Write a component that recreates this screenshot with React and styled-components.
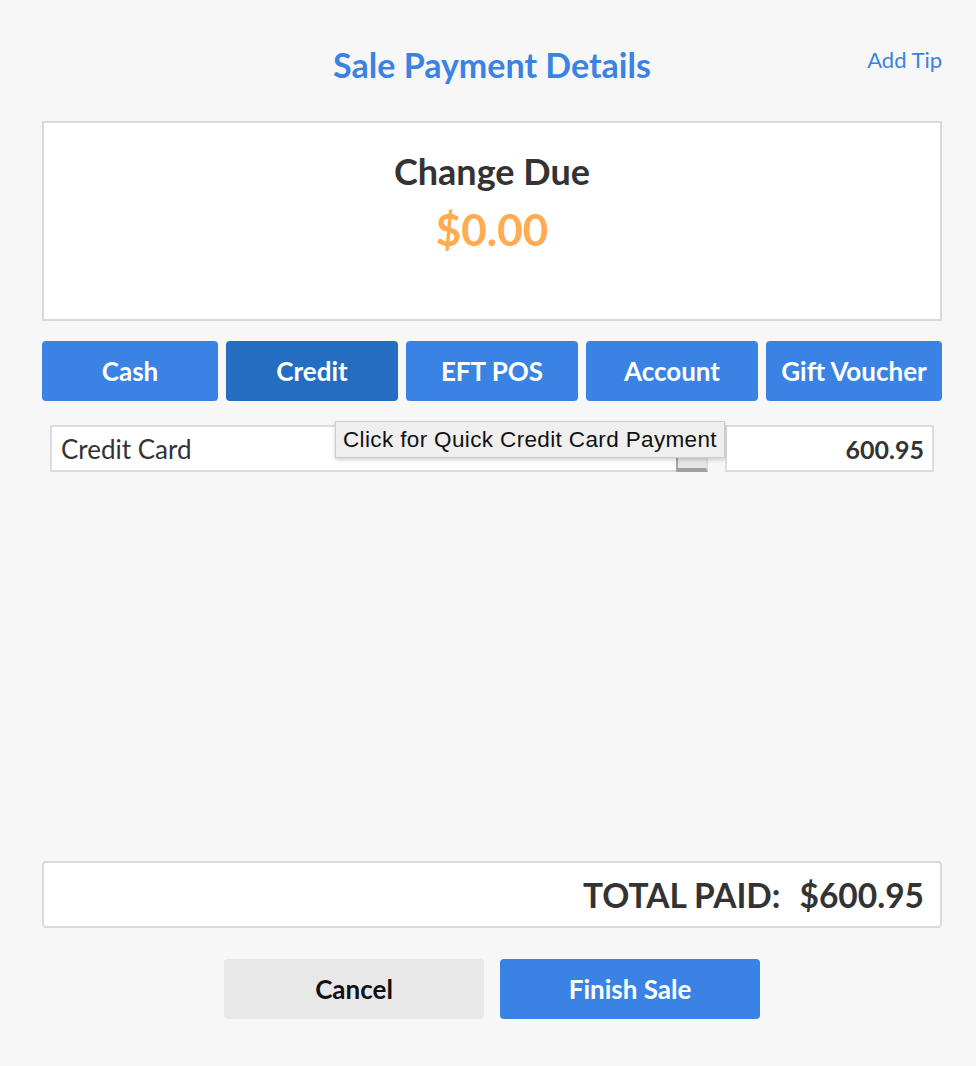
import React from 'react';
import styled, { createGlobalStyle } from 'styled-components';

const GlobalStyle = createGlobalStyle`
  html, body {
    margin: 0;
    padding: 0;
    background-color: #f7f7f7;
  }
  body {
    font-family: Lato, "Open Sans", sans-serif;
    color: #333;
  }
`;

const Page = styled.div`
  box-sizing: border-box;
  height: 100vh;
  padding: 44px 34px 47px 42px;
  display: flex;
  flex-direction: column;
`;

const Header = styled.div`
  display: grid;
  grid-template-columns: 1fr auto 1fr;
  align-items: start;
  height: 42px;
  margin-bottom: 35px;
`;

const Title = styled.h1`
  grid-column: 2;
  margin: 0;
  font-size: 34px;
  line-height: 42px;
  font-weight: 700;
  color: #3a83e4;
`;

const TipLink = styled.a`
  justify-self: end;
  font-size: 22px;
  line-height: 32px;
  color: #3a83e4;
  text-decoration: none;
  cursor: pointer;
`;

const ChangeBox = styled.div`
  box-sizing: border-box;
  height: 200px;
  background: #fff;
  border: 2px solid #d9d9d9;
  display: flex;
  flex-direction: column;
  align-items: center;
  padding-top: 26px;
`;

const ChangeLabel = styled.div`
  font-size: 36px;
  line-height: 44px;
  font-weight: 700;
  color: #333;
`;

const ChangeAmount = styled.div`
  margin-top: 10px;
  font-size: 44px;
  line-height: 52px;
  font-weight: 700;
  color: #ffab52;
`;

const MethodRow = styled.div`
  display: grid;
  grid-template-columns: 176px repeat(3, 1fr) 176px;
  gap: 8px;
  margin-top: 20px;
`;

const MethodButton = styled.button`
  height: 60px;
  border: none;
  border-radius: 4px;
  background: ${({ $active }) => ($active ? '#256dc1' : '#3a83e4')};
  color: #fff;
  font-family: Lato, sans-serif;
  font-size: 26px;
  font-weight: 700;
  padding: 0;
  cursor: pointer;
`;

const PaymentList = styled.div`
  flex: 1;
  padding: 24px 8px 0;
`;

const PaymentLine = styled.div`
  position: relative;
  display: flex;
  gap: 17px;
`;

const Field = styled.div`
  box-sizing: border-box;
  height: 47px;
  background: #fff;
  border: 2px solid #dcdcdc;
  display: flex;
  align-items: center;
  font-size: 26px;
  color: #333;
`;

const SelectField = styled(Field)`
  position: relative;
  flex: 1;
  padding-left: 9px;
`;

const AmountField = styled(Field)`
  width: 209px;
  justify-content: flex-end;
  padding-right: 8px;
  font-size: 25px;
  font-weight: 700;
`;

const SelectKnob = styled.span`
  position: absolute;
  right: -2px;
  bottom: -2px;
  box-sizing: border-box;
  width: 32px;
  height: 24px;
  background: #e6e6e6;
  border-left: 2px solid #a6a6a6;
  border-bottom: 4px solid #a0a0a0;
  border-right: 2px solid #dcdcdc;
`;

const Tooltip = styled.div`
  position: absolute;
  left: 285px;
  top: -4px;
  box-sizing: border-box;
  height: 37px;
  padding: 0 7px;
  display: flex;
  align-items: center;
  background: #efefef;
  border: 1px solid #cdcdcd;
  box-shadow: 0 2px 4px rgba(0, 0, 0, 0.18);
  font-family: "Liberation Sans", Arial, sans-serif;
  font-size: 22.5px;
  letter-spacing: 0.36px;
  color: #111;
  white-space: nowrap;
`;

const TotalBox = styled.div`
  box-sizing: border-box;
  height: 67px;
  background: #fff;
  border: 2px solid #dadada;
  border-radius: 4px;
  display: flex;
  align-items: center;
  justify-content: flex-end;
  gap: 19px;
  padding-right: 16px;
  font-size: 33.5px;
  font-weight: 700;
  color: #333;
`;

const Actions = styled.div`
  display: flex;
  justify-content: center;
  gap: 16px;
  margin-top: 31px;
`;

const ActionButton = styled.button`
  width: 260px;
  height: 60px;
  border: none;
  border-radius: 4px;
  background: ${({ $primary }) => ($primary ? '#3a83e4' : '#e8e8e8')};
  color: ${({ $primary }) => ($primary ? '#fff' : '#111')};
  font-family: Lato, sans-serif;
  font-size: 26px;
  font-weight: 700;
  cursor: pointer;
`;

const methods = ['Cash', 'Credit', 'EFT POS', 'Account', 'Gift Voucher'];

export default function App() {
  return (
    <>
      <GlobalStyle />
      <Page>
        <Header>
          <Title>Sale Payment Details</Title>
          <TipLink>Add Tip</TipLink>
        </Header>

        <ChangeBox>
          <ChangeLabel>Change Due</ChangeLabel>
          <ChangeAmount>$0.00</ChangeAmount>
        </ChangeBox>

        <MethodRow>
          {methods.map((m) => (
            <MethodButton key={m} $active={m === 'Credit'}>
              {m}
            </MethodButton>
          ))}
        </MethodRow>

        <PaymentList>
          <PaymentLine>
            <SelectField>
              Credit Card
              <SelectKnob />
            </SelectField>
            <AmountField>600.95</AmountField>
            <Tooltip>Click for Quick Credit Card Payment</Tooltip>
          </PaymentLine>
        </PaymentList>

        <TotalBox>
          <span>TOTAL PAID:</span>
          <span>$600.95</span>
        </TotalBox>

        <Actions>
          <ActionButton>Cancel</ActionButton>
          <ActionButton $primary>Finish Sale</ActionButton>
        </Actions>
      </Page>
    </>
  );
}
